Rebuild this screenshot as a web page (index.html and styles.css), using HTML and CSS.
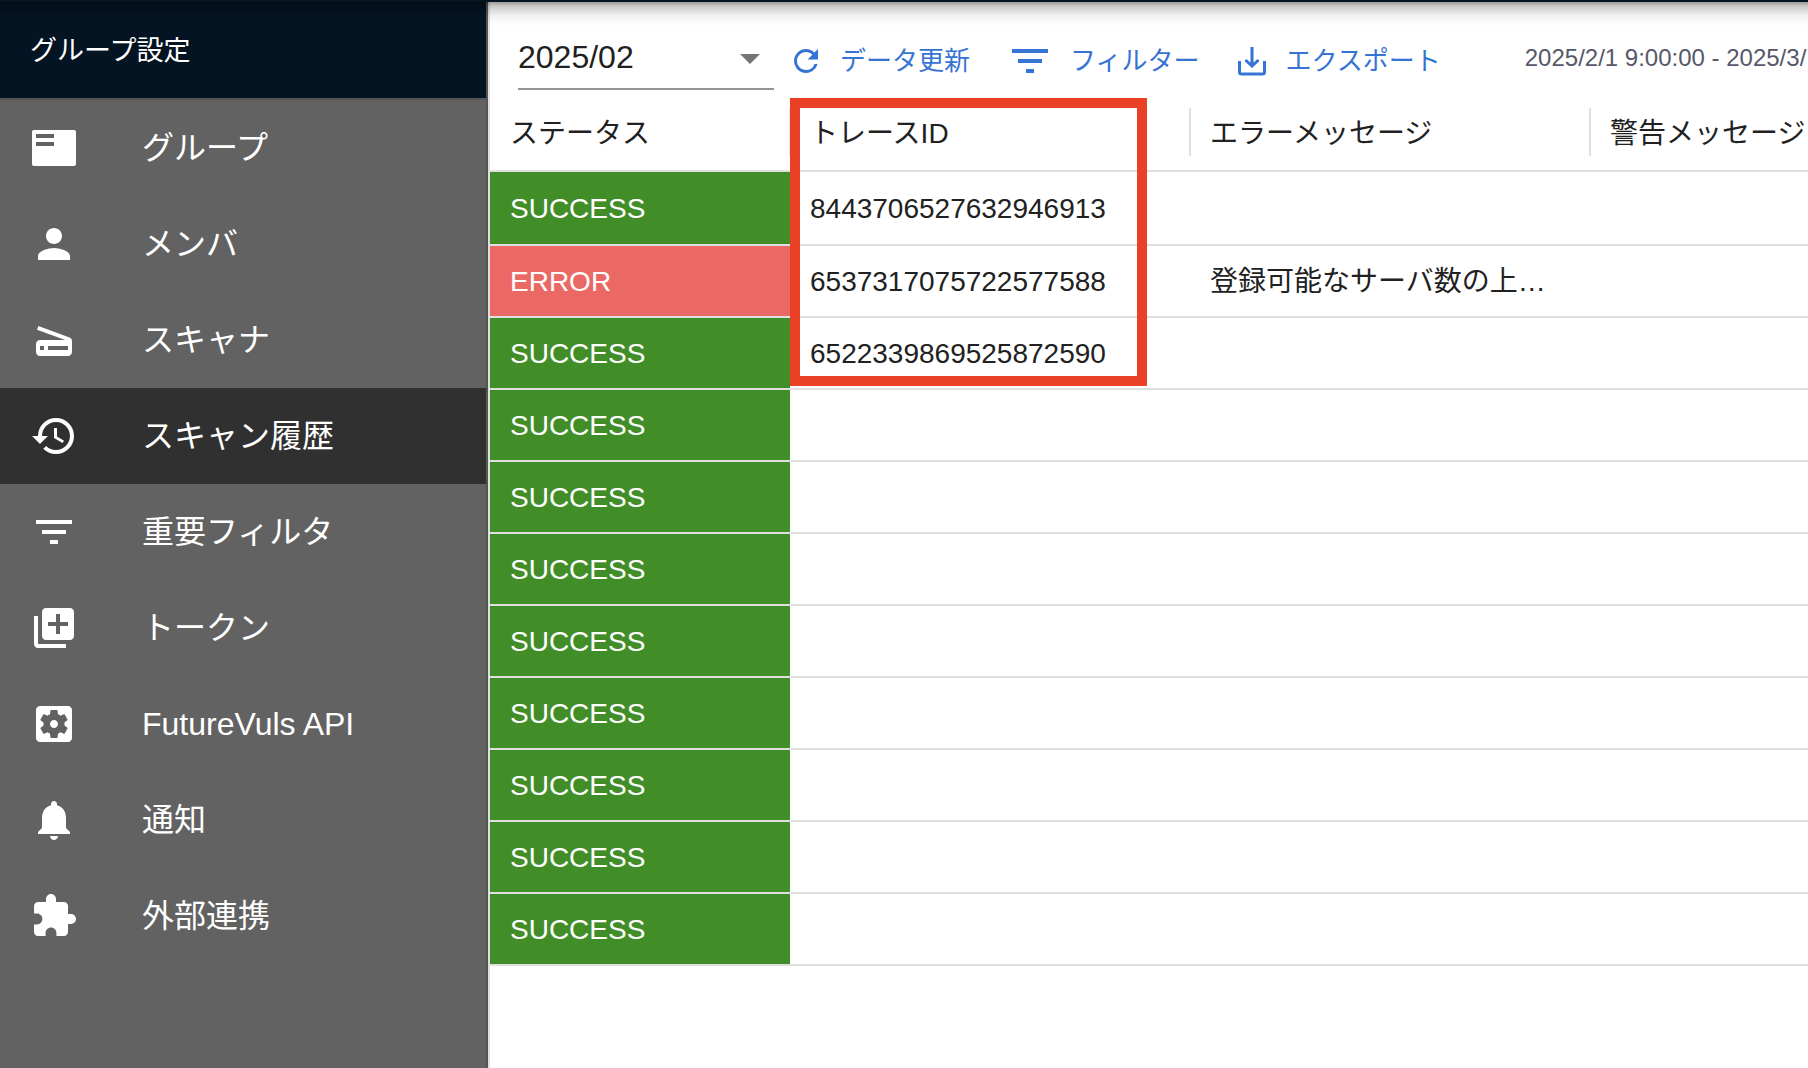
FILE: index.html
```html
<!DOCTYPE html>
<html lang="ja">
<head>
<meta charset="utf-8">
<meta name="viewport" content="width=device-width, initial-scale=1">
<title>スキャン履歴</title>
<link rel="stylesheet" href="styles.css">
</head>
<body>
<header class="appbar"></header>
<div class="layout">
  <aside class="sidebar">
    <h1 class="sidebar-title">グループ設定</h1>
    <nav class="menu">
      <a class="menu-item" href="#"><svg class="icon" viewBox="0 0 24 24"><path fill-rule="evenodd" d="M22 3H2c-.6 0-1 .4-1 1v16c0 .6.4 1 1 1h20c.6 0 1-.4 1-1V4c0-.6-.4-1-1-1zM12 11H3V9h9v2zm0-4H3V5h9v2z"/></svg>グループ</a>
      <a class="menu-item" href="#"><svg class="icon" viewBox="0 0 24 24"><path d="M12 12c2.210 0 4-1.790 4-4s-1.790-4-4-4-4 1.790-4 4 1.790 4 4 4zm0 2c-2.670 0-8 1.340-8 4v2h16v-2c0-2.660-5.330-4-8-4z"/></svg>メンバ</a>
      <a class="menu-item" href="#"><svg class="icon" viewBox="0 0 24 24"><path fill-rule="evenodd" d="M19.800 10.700L4.200 5l-.7 1.900L17.600 12H5c-1.100 0-2 .9-2 2v4c0 1.100.9 2 2 2h14c1.100 0 2-.9 2-2v-5.500c0-.8-.5-1.600-1.200-1.800zM7 17H5v-2h2v2zm12 0H9v-2h10v2z"/></svg>スキャナ</a>
      <a class="menu-item active" href="#" aria-current="page"><svg class="icon" viewBox="0 0 24 24"><path d="M13 3a9 9 0 0 0-9 9H1l3.890 3.890.07.14L9 12H6c0-3.870 3.130-7 7-7s7 3.130 7 7-3.130 7-7 7c-1.930 0-3.680-.79-4.940-2.060l-1.420 1.420A8.954 8.954 0 0 0 13 21a9 9 0 0 0 0-18zm-1 5v5l4.280 2.540.72-1.210-3.500-2.080V8H12z"/></svg>スキャン履歴</a>
      <a class="menu-item" href="#"><svg class="icon" viewBox="0 0 24 24"><path d="M10 18h4v-2h-4v2zM3 6v2h18V6H3zm3 7h12v-2H6v2z"/></svg>重要フィルタ</a>
      <a class="menu-item" href="#"><svg class="icon" viewBox="0 0 24 24"><path fill-rule="evenodd" d="M4 6H2v14c0 1.100.9 2 2 2h14v-2H4V6zm16-4H8c-1.100 0-2 .9-2 2v12c0 1.100.9 2 2 2h12c1.100 0 2-.9 2-2V4c0-1.100-.9-2-2-2zm-1 9h-4v4h-2v-4H9V9h4V5h2v4h4v2z"/></svg>トークン</a>
      <a class="menu-item" href="#"><svg class="icon" viewBox="0 0 24 24"><path d="M12 10c-1.100 0-2 .9-2 2s.9 2 2 2 2-.9 2-2-.9-2-2-2zm7-7H5c-1.110 0-2 .9-2 2v14c0 1.100.89 2 2 2h14c1.110 0 2-.9 2-2V5c0-1.100-.89-2-2-2zm-1.750 9c0 .23-.02.46-.05.68l1.480 1.160c.13.11.17.3.08.45l-1.400 2.420c-.09.15-.27.21-.43.15l-1.740-.7c-.36.28-.76.51-1.180.69l-.26 1.850c-.03.17-.18.3-.35.3h-2.800c-.17 0-.32-.13-.35-.29l-.26-1.850c-.43-.18-.82-.41-1.180-.69l-1.740.7c-.16.06-.34 0-.43-.15l-1.400-2.420c-.09-.15-.05-.34.08-.45l1.480-1.160c-.03-.23-.05-.46-.05-.69 0-.23.02-.46.05-.68l-1.480-1.160c-.13-.11-.17-.3-.08-.45l1.400-2.420c.09-.15.27-.21.43-.15l1.740.7c.36-.28.76-.51 1.180-.69l.26-1.850c.03-.17.18-.3.35-.3h2.800c.17 0 .32.13.35.29l.26 1.850c.43.18.82.41 1.180.69l1.740-.7c.16-.06.34 0 .43.15l1.400 2.420c.09.15.05.34-.08.45l-1.480 1.160c.03.23.05.46.05.69z"/></svg>FutureVuls API</a>
      <a class="menu-item" href="#"><svg class="icon" viewBox="0 0 24 24"><path d="M12 22c1.100 0 2-.9 2-2h-4c0 1.100.89 2 2 2zm6-6v-5c0-3.070-1.640-5.640-4.500-6.320V4c0-.83-.67-1.500-1.500-1.500s-1.500.67-1.500 1.500v.68C7.630 5.360 6 7.920 6 11v5l-2 2v1h16v-1l-2-2z"/></svg>通知</a>
      <a class="menu-item" href="#"><svg class="icon" viewBox="0 0 24 24"><path d="M20.500 11H19V7c0-1.100-.9-2-2-2h-4V3.500a2.500 2.500 0 0 0-5 0V5H4c-1.100 0-1.990.9-1.990 2v3.800H3.500c1.490 0 2.700 1.210 2.700 2.700s-1.210 2.700-2.700 2.700H2V20c0 1.100.9 2 2 2h3.800v-1.500c0-1.490 1.210-2.700 2.700-2.700s2.700 1.210 2.700 2.700V22H17c1.100 0 2-.9 2-2v-4h1.500a2.500 2.500 0 0 0 0-5z"/></svg>外部連携</a>
    </nav>
  </aside>
  <main class="content">
    <div class="toolbar">
      <div class="month">
        <select class="month-select" aria-label="対象月"><option>2025/02</option></select>
        <svg class="month-arrow" viewBox="0 0 20 10"><path d="M0 0h20L10 10z"/></svg>
      </div>
      <button class="tool" type="button"><svg class="tool-icon" viewBox="0 0 24 24"><path d="M17.650 6.350A7.958 7.958 0 0 0 12 4a8 8 0 1 0 7.730 10h-2.080A5.990 5.990 0 0 1 12 18c-3.310 0-6-2.690-6-6s2.690-6 6-6c1.660 0 3.140.69 4.220 1.780L13 11h7V4l-2.350 2.350z"/></svg>データ更新</button>
      <button class="tool tool-filter" type="button"><svg class="tool-icon wide" viewBox="0 0 24 24"><path d="M10 18h4v-2h-4v2zM3 6v2h18V6H3zm3 7h12v-2H6v2z"/></svg>フィルター</button>
      <button class="tool tool-export" type="button"><svg class="tool-icon" viewBox="0 0 36 36"><path d="M5.500 18v11a2 2 0 0 0 2 2h21a2 2 0 0 0 2-2V18M18 4v19M11.500 17l6.500 6 6.500-6" fill="none" stroke="currentColor" stroke-width="3"/></svg>エクスポート</button>
      <span class="period">2025/2/1 9:00:00 - 2025/3/</span>
    </div>
    <div class="grid">
      <table class="history">
        <colgroup><col class="col-status"><col class="col-data"><col class="col-data"><col></colgroup>
        <thead>
          <tr><th scope="col">ステータス</th><th scope="col">トレースID</th><th scope="col">エラーメッセージ</th><th scope="col">警告メッセージ</th></tr>
        </thead>
        <tbody>
          <tr><td class="success">SUCCESS</td><td>8443706527632946913</td><td></td><td></td></tr>
          <tr><td class="error">ERROR</td><td>6537317075722577588</td><td>登録可能なサーバ数の上…</td><td></td></tr>
          <tr><td class="success">SUCCESS</td><td>6522339869525872590</td><td></td><td></td></tr>
          <tr><td class="success">SUCCESS</td><td></td><td></td><td></td></tr>
          <tr><td class="success">SUCCESS</td><td></td><td></td><td></td></tr>
          <tr><td class="success">SUCCESS</td><td></td><td></td><td></td></tr>
          <tr><td class="success">SUCCESS</td><td></td><td></td><td></td></tr>
          <tr><td class="success">SUCCESS</td><td></td><td></td><td></td></tr>
          <tr><td class="success">SUCCESS</td><td></td><td></td><td></td></tr>
          <tr><td class="success">SUCCESS</td><td></td><td></td><td></td></tr>
          <tr><td class="success">SUCCESS</td><td></td><td></td><td></td></tr>
        </tbody>
      </table>
      <div class="highlight"></div>
    </div>
  </main>
</div>
</body>
</html>
```
FILE: styles.css
```css
* {
  box-sizing: border-box;
}

body {
  margin: 0;
  min-height: 100vh;
  display: flex;
  flex-direction: column;
  background: #fff;
  color: #212121;
  font-family: "Liberation Sans", "Noto Sans CJK JP", sans-serif;
  font-size: 28px;
}

.appbar {
  position: relative;
  height: 2px;
  background: #041423;
}

/* soft shadow the app bar casts on the page below */
.appbar::after {
  content: "";
  position: absolute;
  top: 2px;
  left: 0;
  right: 0;
  height: 24px;
  background: linear-gradient(rgba(0, 0, 0, .38), rgba(0, 0, 0, .2) 20%, rgba(0, 0, 0, .06) 55%, transparent);
  pointer-events: none;
}

.layout {
  flex: 1;
  display: flex;
}

.sidebar {
  flex: 0 0 488px;
  background: #626262;
  border-right: 2px solid #555;
  color: #fff;
}

.sidebar-title {
  display: flex;
  align-items: center;
  height: 98px;
  margin: 0;
  padding: 0 30px 4px;
  background: #041423;
  border-bottom: 2px solid #555;
  font-size: 27px;
  font-weight: 400;
}

.menu-item {
  display: flex;
  align-items: center;
  gap: 64px;
  height: 96px;
  padding: 0 30px;
  color: #fff;
  font-size: 32px;
  line-height: 40px;
  text-decoration: none;
}

.menu-item.active {
  background: #303030;
}

.icon {
  flex: none;
  width: 48px;
  height: 48px;
  fill: currentColor;
}

.content {
  flex: 1;
  min-width: 0;
  border-left: 2px solid #e0e0e0;
  overflow: hidden;
}

.toolbar {
  display: flex;
  align-items: center;
  height: 90px;
  padding-left: 28px;
  white-space: nowrap;
}

.month {
  position: relative;
  flex: none;
  width: 256px;
  align-self: flex-end;
  margin-bottom: 2px;
}

.month-select {
  display: block;
  width: 100%;
  height: 68px;
  padding: 4px 48px 0 0;
  border: 0;
  border-bottom: 2px solid #949494;
  appearance: none;
  background: none;
  color: inherit;
  font: inherit;
  font-size: 32px;
}

.month-arrow {
  position: absolute;
  right: 14px;
  top: 32px;
  width: 20px;
  height: 10px;
  fill: #757575;
  pointer-events: none;
}

.tool {
  flex: none;
  display: flex;
  align-items: center;
  gap: 16px;
  height: 62px;
  margin: 28px 0 0 14px;
  padding: 0;
  border: 0;
  background: none;
  color: #3574d2;
  font: inherit;
  font-size: 26px;
  line-height: 36px;
}

.tool-filter {
  margin-left: 36px;
}

.tool-export {
  margin-left: 34px;
}

.tool-icon {
  flex: none;
  width: 36px;
  height: 36px;
  fill: currentColor;
}

.tool-icon.wide {
  width: 48px;
  height: 48px;
}

.period {
  flex: none;
  margin: 22px 0 0 84px;
  color: #555869;
  font-size: 24px;
}

.grid {
  position: relative;
}

.history {
  width: 100%;
  table-layout: fixed;
  border-collapse: separate;
  border-spacing: 0;
}

.col-status {
  width: 300px;
}

.col-data {
  width: 400px;
}

.history th,
.history td {
  height: 72px;
  padding: 2px 0 0 20px;
  border-bottom: 2px solid #e0e0e0;
  font-weight: 400;
  line-height: 40px;
  text-align: left;
  white-space: nowrap;
}

.history th {
  position: relative;
  height: 80px;
  padding-top: 6px;
}

.history tbody tr:first-child td {
  height: 74px;
}

/* column separators in the header row */
.history th + th::before {
  content: "";
  position: absolute;
  left: -1px;
  top: 16px;
  width: 2px;
  height: 48px;
  background: #e0e0e0;
}

.history .success {
  background: #418e28;
  color: #fff;
}

.history .error {
  background: #eb6965;
  color: #fff;
}

/* frame around the trace IDs */
.highlight {
  position: absolute;
  left: 300px;
  top: 6px;
  width: 357px;
  height: 288px;
  border: 10px solid #ea4025;
  pointer-events: none;
}
```
